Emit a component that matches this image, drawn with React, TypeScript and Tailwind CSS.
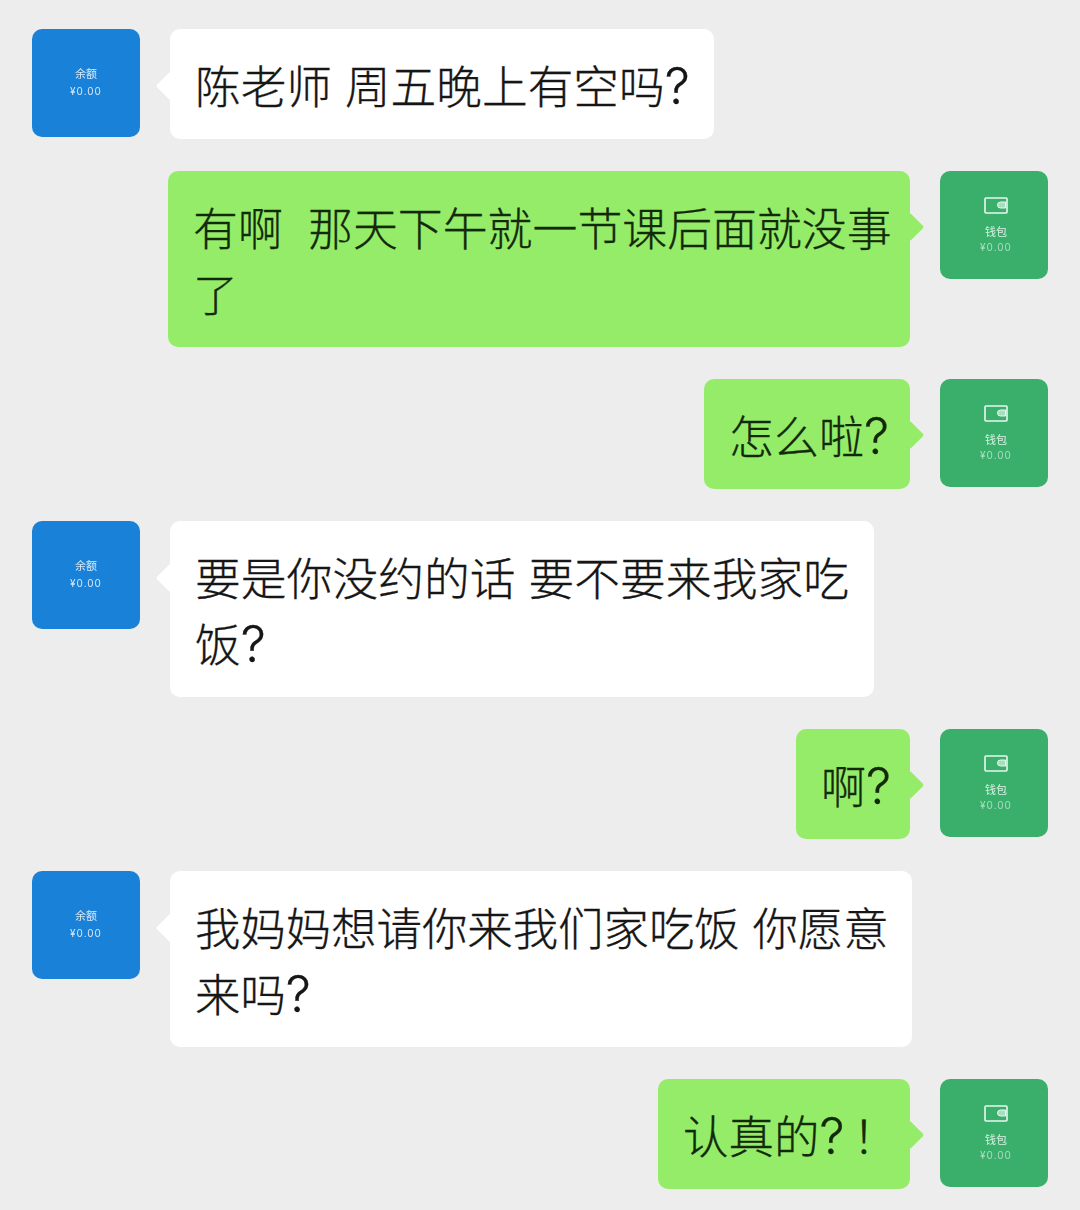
import React from "react";

const font = { fontFamily: 'Inter, "Noto Sans CJK SC", sans-serif' };

function Q({ cls = "" }: { cls?: string }) {
  return <span className={`text-[50px] leading-none ${cls}`}>?</span>;
}

function BlueAvatar() {
  return (
    <div className="flex h-[108px] w-[108px] shrink-0 flex-col items-center rounded-[10px] bg-[#1a81d8] pt-[38px] text-[#d7e9f8] blur-[0.5px]">
      <div className="text-[11px] leading-[14px]">余额</div>
      <div className="mt-[3px] text-[10px] leading-[14px] tracking-[1px]">¥0.00</div>
    </div>
  );
}

function GreenAvatar() {
  return (
    <div className="flex h-[108px] w-[108px] shrink-0 flex-col items-center rounded-[10px] bg-[#3aae6b] pl-[4px] pt-[26px] text-[#d8f2e3] blur-[0.5px]">
      <svg width="24" height="17" viewBox="0 0 24 17" fill="none" stroke="#e8f8ef" strokeWidth="1.6">
        <rect x="1" y="1" width="22" height="15" rx="1" />
        <path d="M21.5 5h-5a3 3 0 0 0 0 6h5z" fill="#a5dfbd" strokeWidth="1" />
      </svg>
      <div className="mt-[11px] text-[11px] leading-[14px]">钱包</div>
      <div className="mt-[1px] text-[10px] leading-[14px] tracking-[1px] opacity-70">¥0.00</div>
    </div>
  );
}

function Left({ lines, cls }: { lines: React.ReactNode[]; cls: string }) {
  return (
    <div className="flex items-start gap-[30px]">
      <BlueAvatar />
      <div className={`relative rounded-[10px] bg-white pb-[18px] pl-[25px] pt-[26px] font-light leading-[66px] whitespace-pre text-[#161616] [-webkit-text-stroke:0.3px_#161616] ${cls}`}>
        <div className="absolute -left-[10px] top-[47px] h-[20px] w-[20px] rotate-45 rounded-[2px] bg-white" />
        {lines.map((l, i) => (
          <div key={i} className="relative h-[66px]">{l}</div>
        ))}
      </div>
    </div>
  );
}

function Right({ lines, cls }: { lines: React.ReactNode[]; cls: string }) {
  return (
    <div className="flex items-start justify-end gap-[30px]">
      <div className={`relative rounded-[10px] bg-[#95ec69] pb-[18px] pl-[25px] pt-[26px] font-light leading-[66px] whitespace-pre text-[#122a0a] [-webkit-text-stroke:0.3px_#122a0a] ${cls}`}>
        <div className="absolute -right-[10px] top-[46px] h-[20px] w-[20px] rotate-45 rounded-[2px] bg-[#95ec69]" />
        {lines.map((l, i) => (
          <div key={i} className="relative h-[66px]">{l}</div>
        ))}
      </div>
      <GreenAvatar />
    </div>
  );
}

export default function App() {
  return (
    <div style={font} className="flex h-[1210px] w-[1080px] flex-col gap-8 overflow-hidden bg-[#eeedee] px-8 pt-[29px]">
      <Left cls="w-[544px] text-[45.7px]" lines={[<>陈老师 周五晚上有空吗<Q /></>]} />
      <Right cls="w-[742px] text-[44.9px]" lines={["有啊  那天下午就一节课后面就没事", "了"]} />
      <Right cls="w-[206px] text-[45px]" lines={[<>怎么啦<Q /></>]} />
      <Left cls="w-[704px] text-[45.8px]" lines={["要是你没约的话 要不要来我家吃", <>饭<Q /></>]} />
      <Right cls="w-[114px] text-[45px]" lines={[<>啊<Q /></>]} />
      <Left cls="w-[742px] text-[45.4px]" lines={["我妈妈想请你来我们家吃饭 你愿意", <>来吗<Q /></>]} />
      <Right cls="w-[252px] text-[45.5px]" lines={[<>认真的<Q cls="tracking-[8px]" />！</>]} />
    </div>
  );
}
